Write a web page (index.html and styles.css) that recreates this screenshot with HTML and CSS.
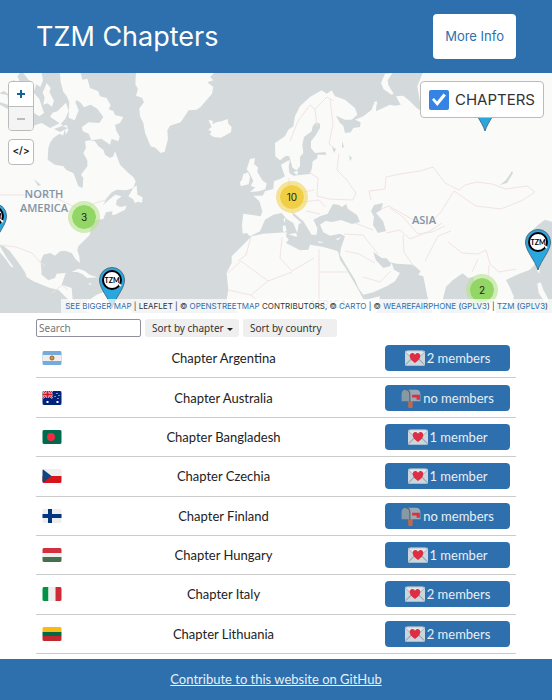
FILE: index.html
```html
<!DOCTYPE html>
<html lang="en">
<head>
<meta charset="utf-8">
<meta name="viewport" content="width=device-width, initial-scale=1">
<title>TZM Chapters</title>
<link rel="stylesheet" href="styles.css">
</head>
<body>
<svg class="defs" aria-hidden="true">
  <symbol id="love" viewBox="0 0 36 36">
    <rect y="5" width="36" height="27" rx="2" fill="#ccd6dd"/>
    <path d="M1 30l12-12M35 30L23 18" stroke="#99aab5" stroke-width="2"/>
    <path d="M1 8l14 12q3 2 6 0L35 8q-1-3-4-3H5Q2 5 1 8z" fill="#e1e8ed" stroke="#99aab5" stroke-width="1.5"/>
    <path d="M27.500 14c0-6-7-7-9.500-2-2.500-5-9.500-4-9.500 2 0 6 5 9.500 9.500 13 4.500-3.500 9.500-7 9.500-13z" fill="#dd2e44"/>
  </symbol>
  <symbol id="mailbox" viewBox="0 0 36 36">
    <path d="M13 22h8v13q-4 2-8 0z" fill="#c1694f"/>
    <path d="M8 3h19q8 0 8 9v12H14z" fill="#99aab5"/>
    <path d="M1 12q0-9 7.500-9T16 12v12H1z" fill="#8899a6"/>
    <path d="M8 3q8 0 8 9v13" fill="none" stroke="#55646f" stroke-width="2"/>
    <path d="M20 12h14v9h-6v-4h-8z" fill="#dd2e44"/>
  </symbol>
  <symbol id="pin" viewBox="0 0 26 42">
    <path d="M13 41C10 31 .5 22 .5 13a12.500 12.500 0 0 1 25 0C25.500 22 16 31 13 41z" fill="#2ba7df" stroke="#4a6f82"/>
    <circle cx="13" cy="13" r="9" fill="#fff" stroke="#000" stroke-width="2"/>
    <path d="M20 17l2 2" stroke="#fff" stroke-width="2"/>
  </symbol>
</svg>
<header class="top">
  <h1>TZM Chapters</h1>
  <a class="info" href="#info">More Info</a>
</header>
<section class="map" aria-label="Map of chapters">
  <svg class="world" viewBox="0 73 552 240" preserveAspectRatio="xMidYMid slice" aria-hidden="true">
    <g class="land" transform="translate(0 73) scale(.3333)">
      <path d="M0 95L30 112 60 125 75 145 90 140 100 158 125 150 150 165 180 150 190 160 200 155 205 172 195 190 178 182 160 195 150 210 145 225 143 260 165 275 190 280 200 292 220 300 228 320 235 340 248 345 250 315 243 305 262 280 262 262 250 240 258 225 255 205 270 202 285 205 295 220 310 230 315 245 330 255 340 250 345 235 360 275 385 300 400 312 407 325 400 345 378 352 350 350 335 358 320 375 310 395 330 378 345 365 365 370 350 382 348 395 360 402 380 398 375 410 345 425 335 425 338 415 318 418 310 438 290 440 272 460 270 485 250 505 235 520 232 532 238 550 240 570 228 560 215 540 195 533 180 535 165 548 150 540 130 545 122 565 125 605 145 622 165 615 170 602 197 600 185 635 215 645 218 680 240 700 290 665 310 658 380 700 400 720H270L225 695 200 675 175 650 150 645 100 625 80 612 75 598 60 575 30 535 10 518 0 515z"/>
      <path d="M0 520l15 25 8 13 18 25-8-2-14-20-9-11-10-12zM385 370l15-25 10-8 2 28 16 8-2 16-12-3-9 4-6-12z"/>
      <path d="M180 0h62l5 20 15-3 8 28 25 10 5 15 20 5 12 22-6 12 14 5 5 12 25 6-10 18-15 5 4 18 10 18-4 14-20-8-5 18-26-18-30 5-8-20-18-8-2-12 20-14 32 2 12-18-18-25-20-12-20 8-10-14-12-8-8 14-16-12-6-14-10-12-8-30z"/>
      <path d="M70 0h55l4 22-8 20-12-8-6 18-14-14 8-12-12-6zM140 30l12 15-4 12 14 26-6 18-14-10-12 4 4-22-6-14zM0 0h60l-8 10 8 18-20-6-14 6 4 20 12 2-16 14-14-10-12 6zM0 62l22 4 4 30-26-8zM102 60l16 18 14 42-14 10-16-10-4-32zM172 115l26-26 8 24-10 24-14 16-32-22 8-12zM208 82l18 6 10 24-12 30-18-8zM215 597l20-10 18 6 16 12 24 8-32 2-14-12-16-6zM303 612l24 2 14 14-26 2-16-4zM262 630l14 2-4 4z"/>
      <path d="M408 0h234l-12 12 10 10-18 6 18 14-4 20-34 40-12 8-24 2-16 24-8 12-32 10-8 14 2 26-10 38-12 4-16-16-14-4-16-38-6-32-10-20-2-24 14-18-6-14-18-6 6-20-8-14z"/>
      <path d="M625 140l14 4-2 10 12-6 18-4 16-6 2 14 10 10-2 16-30 16-22-2-12-8 6-8-10-6 10-8z"/>
    </g>
    <g class="land" transform="translate(230 73) scale(.3333)">
      <path d="M40 422L92 430 97 415 88 385 70 368 98 368 105 355 130 348 132 325 150 318 165 310 158 292 153 275 172 264 180 262 176 280 178 300 190 308 210 306 240 303 246 285 248 265 262 256 262 245 290 245 285 236 300 235 280 238 255 240 243 225 243 205 258 185 270 165 270 152 258 148 248 160 245 175 222 192 217 215 220 240 210 252 210 280 200 292 188 285 178 250 168 248 150 262 136 250 135 210 165 190 175 170 190 160 195 130 210 100 240 72 275 52 290 62 305 52 315 70 345 80 375 105 382 125 365 140 345 140 318 128 330 150 340 158 345 180 362 178 370 165 390 162 392 148 375 140 400 130 425 110 430 95 440 90 438 115 480 95 495 98 512 95 498 70 520 68 540 85 560 105 575 115 562 40 578 0H966V446L945 440 925 455 908 471 918 501 935 520 940 535 923 561 910 580 898 591 868 602 828 621 838 640 852 671 845 690 830 705 808 690 800 680 798 720H770L752 685 735 640 730 611 715 615 698 601 668 622 648 641 638 681 630 720H608L592 670 580 610 565 605 572 595 550 575 500 572 480 568 470 556 455 555 430 537 437 560 460 585 480 580 485 570 492 590 510 600 495 625 470 640 430 658 400 665 385 645 375 620 350 580 330 545 333 525 345 490 330 482 300 488 280 478 270 455 290 442 340 425 300 420 270 430 250 440 262 465 260 485 245 485 220 445 185 415 190 428 215 450 206 452 202 480 190 450 170 438 155 420 130 425 105 440 90 475 60 490 50 480 38 482 36 455z"/>
      <path d="M65 490L100 482 170 478 168 490 176 500 168 510 210 532 235 530 240 515 280 522 324 535 330 560 350 590 385 650 402 682 450 670 440 720H25L0 695-10 680-5 650-10 600 5 570 5 550 50 505z"/>
      <path d="M60 258l15-3-3 18 12 10-2 14 16 26 12 8-4 18-20 6-26 2 16-14-14-4 8-16-12-24-8-10zM40 304l14-6 6 14-4 22-24 6-2-12 6-8zM453 30l12-28 22-2-14 22 2 14 16 26-6 3-24-16zM432 88l8-4 2 10-8 3zM175 484l24-4 2 12zM158 460l8-4 4 18-10 4zM160 438l6-3-1 16zM262 505l20 3-14 2zM318 498l16-6-10 10zM922 632l10-4 8 22 16 30-8 12-22-32zM920 590l10-8-2 20zM568 700l4 20h-6zM190 297l14-4-2 14z"/>
    </g>
    <g class="sea">
      <path d="M328 213l5-9 6 1 3 2 4-3 2 5 9 6 3 7-8 2-11-4-9 2-6-1zM371 211l3-6 9-2-2 7-5 3 7 8 3 10-8 2-5-8 1-8zM500 185l6-5 6-9 1 2-6 10zM54 129l8-3 6 2-8 4zM63 136l2-7 1 7zM71 134l8 4 0 7-7-3zM34 179l7 6-3 1zM18 154l6 1-4 2zM332 147l4 2-2 4zM342 141l2 6-2 1zM349 155l3 3-2 3z"/>
    </g>
    <path class="border" d="M0 195h50l14 7 18 8 13-7 11-3M0 245l16 2 16 6 8 9 5 4M52 293l10-8 6 5M290 141l8-20 12-16 5 4 12-12 7 4M315 109l2 17M330 99l3 25-4 20 5 4M277 191l8 8 4 9M289 178v12l9 4M309 172l9 6-1 18 12 3 24 1 3-7-10-14-9-9 2-17M299 193l15-3M303 202l16-2 6 7M306 211l14 3M371 200l-2-9 16-2 1-12 14-3 20-3 13-4 12 16 14 7 6-5 12-3 15 2 14 5 21-3 8 6-12 8-22 9-25-3-22-15-5 8-8 13-13 13-16-6-23-13-8 3M390 208l13 9 15 17 14-2 13-6M344 234l19 1 15 19M345 251l14 3 16 9M355 223l18 7M386 233l14-3 10 9 20-8 12-8M403 235l1 17 10 15M425 261l13-25 13-5M448 242l14 11 16 1 8-4 4 14 9 8 17-3M478 259l-6 13M489 265l-2 25M319 249v54M282 237l-2 21 12 13 22-13M319 272h29M251 237l-5 18-8 6M228 273l13-12 27 20-17 14-23-5M268 281l24-9M251 295l18 17M363 277l17 5 11-11"/>
    <g class="continent">
      <text x="44" y="198">NORTH</text><text x="44" y="212">AMERICA</text>
      <text x="424" y="224">ASIA</text><text class="faint" x="328" y="308">AFRICA</text>
    </g>
  </svg>
  <svg class="pin pin-west" viewBox="0 0 26 42"><use href="#pin"/><text x="13" y="16">TZM</text></svg>
  <svg class="pin pin-south" viewBox="0 0 26 42"><use href="#pin"/><text x="13" y="16">TZM</text></svg>
  <svg class="pin pin-east" viewBox="0 0 26 42"><use href="#pin"/><text x="13" y="16">TZM</text></svg>
  <svg class="pin pin-north" viewBox="0 0 26 42"><use href="#pin"/></svg>
  <button class="cluster c3">3</button>
  <button class="cluster c10">10</button>
  <button class="cluster c2">2</button>
  <div class="tools">
    <div class="zoom"><button aria-label="Zoom in"><svg viewBox="0 0 10 10"><path d="M1 5h8M5 1v8"/></svg></button><button aria-label="Zoom out" disabled><svg viewBox="0 0 10 10"><path d="M1 5h8"/></svg></button></div>
    <button class="embed">&lt;/&gt;</button>
  </div>
  <label class="layer"><input type="checkbox" checked><span>CHAPTERS</span></label>
  <div class="credits"><a href="#map">SEE BIGGER MAP</a> | LEAFLET | © <a href="#osm">OPENSTREETMAP</a> CONTRIBUTORS, © <a href="#carto">CARTO</a> | © <a href="#wfp">WEAREFAIRPHONE</a> (<a href="#gpl">GPLV3</a>) | <a href="#tzm">TZM</a> (<a href="#gpl">GPLV3</a>)</div>
</section>
<main>
  <div class="filters">
    <input type="text" placeholder="Search" aria-label="Search">
    <button>Sort by chapter<i class="caret"></i></button>
    <button>Sort by country</button>
  </div>
  <ul class="chapters">
    <li><svg class="flag" viewBox="0 0 19 14"><path fill="#75aadb" d="M0 0h19v14H0z"/><path fill="#eee" d="M0 4h19v6H0z"/><circle cx="9.500" cy="7" r="2" fill="#d99a35" stroke="#9b5b35"/></svg><span>Chapter Argentina</span><a class="members" href="#ar"><svg><use href="#love"/></svg>2 members</a></li>
    <li><svg class="flag" viewBox="0 0 19 14"><path fill="#00247d" d="M0 0h19v14H0z"/><path d="M0 0l10 7M10 0L0 7" stroke="#eee" stroke-width="2"/><path d="M0 0l10 7M10 0L0 7" stroke="#cf1b2b"/><path d="M5 0v7M0 3.500h10" stroke="#eee" stroke-width="3"/><path d="M5 0v7M0 3.500h10" stroke="#cf1b2b" stroke-width="2"/><path fill="#fff" d="M4 10h2v2H4zM14 2h1v1h-1zM12 5h1v1h-1zM16 4h1v1h-1zM14 10h2v2h-2zM15 7h1v1h-1z"/></svg><span>Chapter Australia</span><a class="members" href="#au"><svg><use href="#mailbox"/></svg>no members</a></li>
    <li><svg class="flag" viewBox="0 0 19 14"><path fill="#006a4e" d="M0 0h19v14H0z"/><circle cx="8.500" cy="7" r="4" fill="#f42a41"/></svg><span>Chapter Bangladesh</span><a class="members" href="#bd"><svg><use href="#love"/></svg>1 member</a></li>
    <li><svg class="flag" viewBox="0 0 19 14"><path fill="#eee" d="M0 0h19v7H0z"/><path fill="#d7141a" d="M0 7h19v7H0z"/><path fill="#11457e" d="M0 0l9 7-9 7z"/></svg><span>Chapter Czechia</span><a class="members" href="#cz"><svg><use href="#love"/></svg>1 member</a></li>
    <li><svg class="flag" viewBox="0 0 19 14"><path fill="#eee" d="M0 0h19v14H0z"/><path d="M7.500 0v14M0 7h19" stroke="#003580" stroke-width="4"/></svg><span>Chapter Finland</span><a class="members" href="#fi"><svg><use href="#mailbox"/></svg>no members</a></li>
    <li><svg class="flag" viewBox="0 0 19 14"><path fill="#d2303e" d="M0 0h19v5H0z"/><path fill="#eee" d="M0 5h19v4H0z"/><path fill="#457050" d="M0 9h19v5H0z"/></svg><span>Chapter Hungary</span><a class="members" href="#hu"><svg><use href="#love"/></svg>1 member</a></li>
    <li><svg class="flag" viewBox="0 0 19 14"><path fill="#009246" d="M0 0h6v14H0z"/><path fill="#eee" d="M6 0h7v14H6z"/><path fill="#ce2b37" d="M13 0h6v14h-6z"/></svg><span>Chapter Italy</span><a class="members" href="#it"><svg><use href="#love"/></svg>2 members</a></li>
    <li><svg class="flag" viewBox="0 0 19 14"><path fill="#fdb913" d="M0 0h19v5H0z"/><path fill="#006a44" d="M0 5h19v4H0z"/><path fill="#c1272d" d="M0 9h19v5H0z"/></svg><span>Chapter Lithuania</span><a class="members" href="#lt"><svg><use href="#love"/></svg>2 members</a></li>
  </ul>
</main>
<footer><a href="#github">Contribute to this website on GitHub</a></footer>
</body>
</html>
```
FILE: styles.css
```css
* { box-sizing: border-box; }
body {
  margin: 0;
  min-height: 100vh;
  display: flex;
  flex-direction: column;
  background: #fff;
  color: #222;
  font-family: Lato, "Open Sans", sans-serif;
}
button, input { font: inherit; margin: 0; }
button { cursor: pointer; }
a { color: #2e6fad; text-decoration: none; }
.defs { position: absolute; width: 0; height: 0; }

.top {
  display: flex;
  justify-content: space-between;
  align-items: center;
  padding: 14px 36px;
  background: #2e6fad;
  font-family: Inter, sans-serif;
}
h1 { margin: 0; color: #fff; font-size: 27px; line-height: 44px; font-weight: 400; }
.info {
  padding: 0 12px;
  border-radius: 4px;
  background: #fff;
  font-size: 13px;
  line-height: 45px;
}

.map {
  position: relative;
  height: 240px;
  overflow: hidden;
  background: #d4dadc;
  font-family: Inter, sans-serif;
}
.world { display: block; width: 100%; height: 100%; }
.land { fill: #fafaf8; }
.sea { fill: #d4dadc; }
.border { fill: none; stroke: #f2e3e4; stroke-width: 1; }
.continent { fill: #8394a5; font: 600 11px "Open Sans", sans-serif; text-anchor: middle; }
.faint { opacity: .5; }
.pin { position: absolute; width: 26px; height: 42px; }
.pin text { font: 700 7px Lato, sans-serif; text-anchor: middle; }
.pin-west { left: -19px; top: 130px; }
.pin-south { left: 99px; top: 194px; }
.pin-east { left: 525px; top: 156px; }
.pin-north { left: 472px; top: 17px; }
.cluster {
  position: absolute;
  width: 32px;
  height: 32px;
  padding: 0;
  border: 4px solid rgba(181, 226, 140, .6);
  border-radius: 50%;
  background: #92d765;
  background-clip: padding-box;
  color: #222;
  font-size: 10px;
}
.c3 { left: 68px; top: 128px; }
.c10 { left: 276px; top: 108px; border-color: rgba(241, 211, 87, .6); background-color: #f1cf45; }
.c2 { left: 466px; top: 201px; }
.tools { position: absolute; left: 8px; top: 8px; display: grid; gap: 8px; }
.tools button {
  display: grid;
  place-items: center;
  width: 24px;
  height: 24px;
  padding: 0;
  border: 0;
  background: #fff;
  color: #222;
  font-size: 10px;
  font-weight: 600;
}
.zoom, .tools .embed { border: 1px solid #bbb; border-radius: 4px; overflow: hidden; }
.tools .embed { width: 26px; height: 26px; padding-bottom: 4px; }
.zoom button + button { height: 24px; border-top: 1px solid #bbb; background: #f4f4f4; }
.zoom svg { width: 10px; height: 10px; stroke: #0f6398; stroke-width: 2; }
.zoom button:disabled svg { stroke: #bbb; }
.layer {
  position: absolute;
  right: 8px;
  top: 8px;
  display: flex;
  align-items: center;
  gap: 6px;
  height: 37px;
  padding: 0 8px;
  border: 1px solid #bbb;
  border-radius: 4px;
  background: #fff;
  color: #333;
  font-size: 15px;
}
.layer input {
  appearance: none;
  width: 20px;
  height: 20px;
  border-radius: 2px;
  background: #3584e4;
  display: grid;
  place-items: center;
}
.layer input:checked::before {
  content: "";
  width: 14px;
  height: 14px;
  background: #fff;
  clip-path: polygon(0 52%, 14% 40%, 36% 64%, 82% 8%, 100% 22%, 38% 96%);
}
.credits {
  position: absolute;
  right: 0;
  bottom: 0;
  padding: 0 4px;
  background: rgba(255, 255, 255, .7);
  color: #333;
  font-size: 8px;
  line-height: 14px;
  white-space: nowrap;
}

main { flex: 1; display: flex; flex-direction: column; padding: 6px 36px 5px; }
.filters { display: flex; gap: 4px; font-family: "Noto Sans", sans-serif; font-size: 10px; }
.filters input {
  width: 105px;
  height: 18px;
  padding: 0 2px;
  border: 1px solid #8f8f9d;
  border-radius: 2px;
}
.filters input::placeholder { color: #757575; }
.filters button {
  width: 94px;
  height: 18px;
  padding: 0 7px;
  border: 0;
  border-radius: 3px;
  background: #efefef;
  color: #333;
  text-align: left;
  line-height: 18px;
  white-space: nowrap;
}
.caret {
  display: inline-block;
  margin-left: 3px;
  vertical-align: middle;
  border: 3px solid transparent;
  border-top-color: #222;
  border-bottom: 0;
}
.chapters {
  flex: 1;
  display: flex;
  flex-direction: column;
  margin: 2px 0 0;
  padding: 0;
  list-style: none;
  font-size: 13px;
}
.chapters li {
  flex: 1;
  display: grid;
  grid-template-columns: 20px 1fr 125px;
  align-items: center;
  padding: 0 6px;
  border-bottom: 1px solid #ccc;
  text-align: center;
}
.flag { width: 20px; height: 14px; border-radius: 2px; }
.members {
  display: flex;
  align-items: center;
  justify-content: center;
  gap: 2px;
  height: 26px;
  border-radius: 4px;
  background: #2e6fad;
  color: #e8f0f8;
}
.members svg { width: 20px; height: 20px; }

footer {
  padding: 10px;
  background: #2e6fad;
  text-align: center;
  font-size: 13px;
  line-height: 21px;
}
footer a { color: #e8f0f8; text-decoration: underline; }
```
